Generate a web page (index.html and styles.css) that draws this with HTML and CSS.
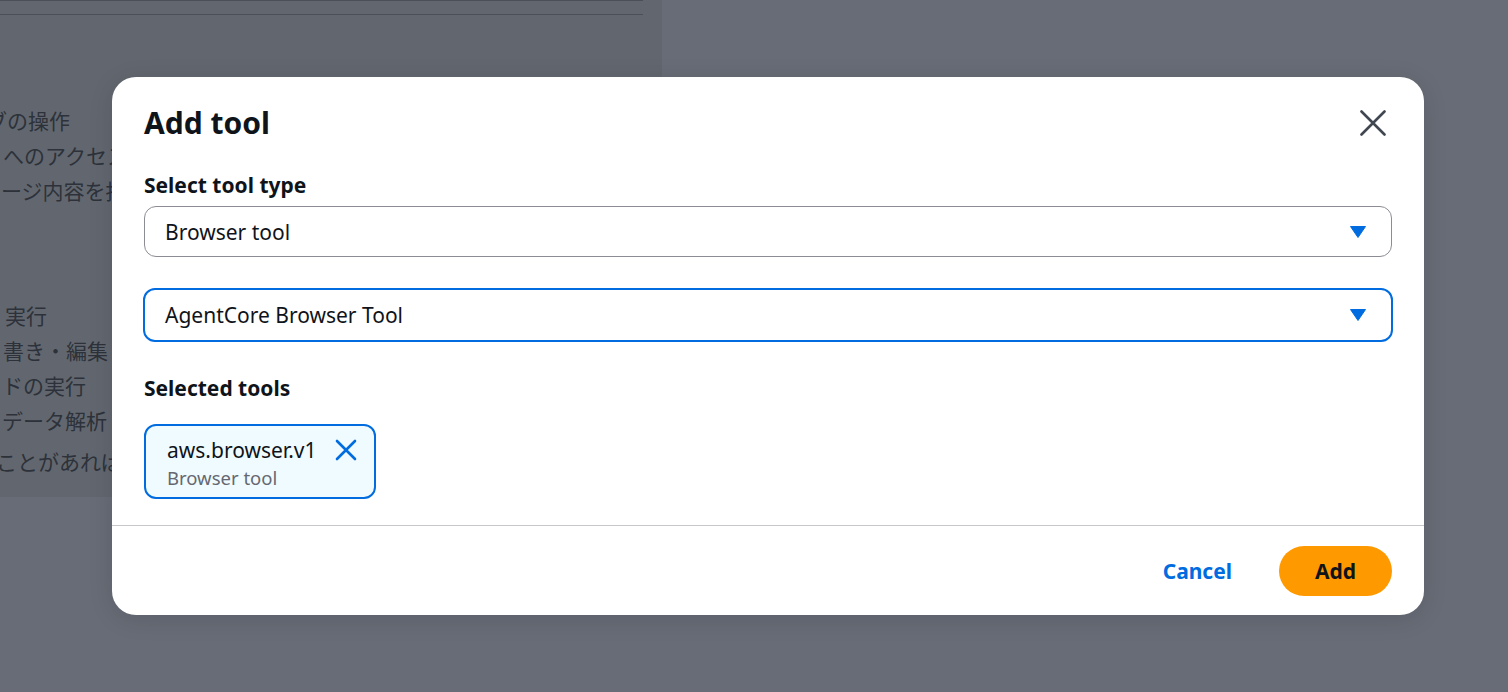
FILE: index.html
```html
<!DOCTYPE html>
<html lang="en">
<head>
<meta charset="utf-8">
<title>Add tool</title>
<link rel="stylesheet" href="styles.css">
</head>
<body>
<div class="stage">
  <div class="panel">
    <div class="rule rule-top"></div>
    <div class="rule"></div>
    <div class="bg-text">
      <p class="l1">ブの操作</p>
      <p class="l2">へのアクセス</p>
      <p class="l3">ージ内容を抽出</p>
      <p class="l4">実行</p>
      <p class="l5">書き・編集</p>
      <p class="l6">ドの実行</p>
      <p class="l7">データ解析</p>
      <p class="l8">ことがあれば</p>
    </div>
  </div>

  <div class="modal" role="dialog" aria-label="Add tool">
    <div class="modal-header">
      <h2 class="modal-title">Add tool</h2>
      <button class="close-btn" aria-label="Close">
        <svg width="26" height="26" viewBox="0 0 26 26"><path d="M1.5 1.5 L24.5 24.5 M24.5 1.5 L1.5 24.5" stroke="#414750" stroke-width="2.6" stroke-linecap="round" fill="none"/></svg>
      </button>
    </div>
    <div class="modal-body">
      <div class="field-label">Select tool type</div>
      <div class="select">
        <span>Browser tool</span>
        <svg class="caret" width="16" height="12" viewBox="0 0 16 12"><path d="M0.5 0.5 H15.5 L8 11.5 Z" fill="#006ce0" stroke="#006ce0" stroke-linejoin="round"/></svg>
      </div>
      <div class="select select-focus">
        <span>AgentCore Browser Tool</span>
        <svg class="caret" width="16" height="12" viewBox="0 0 16 12"><path d="M0.5 0.5 H15.5 L8 11.5 Z" fill="#006ce0" stroke="#006ce0" stroke-linejoin="round"/></svg>
      </div>
      <div class="field-label label-selected">Selected tools</div>
      <div class="token">
        <div class="token-text">
          <div class="token-name">aws.browser.v1</div>
          <div class="token-desc">Browser tool</div>
        </div>
        <svg class="token-x" width="22" height="22" viewBox="0 0 22 22"><path d="M2 2 L20 20 M20 2 L2 20" stroke="#006ce0" stroke-width="2.6" stroke-linecap="round" fill="none"/></svg>
      </div>
    </div>
    <div class="modal-footer">
      <button class="link-btn">Cancel</button>
      <button class="primary-btn">Add</button>
    </div>
  </div>
</div>
</body>
</html>
```

FILE: styles.css
```css
html, body {
  margin: 0;
  padding: 0;
}
body {
  background: #676c76;
  width: 1508px;
  height: 692px;
  overflow: hidden;
  font-family: "Noto Sans", "Open Sans", sans-serif;
}
.stage {
  position: relative;
  width: 1508px;
  height: 692px;
}
.panel {
  width: 662px;
  height: 497px;
  background: #62676f;
  overflow: hidden;
}
.rule {
  height: 1px;
  width: 643px;
  background: #4b5058;
  margin-top: 13px;
}
.rule-top {
  margin-top: 0;
}
.bg-text {
  font-family: "Noto Sans CJK JP", sans-serif;
  font-size: 21px;
  color: #2d323a;
  padding-top: 88px;
}
.bg-text p {
  margin: 0;
  line-height: 35px;
  white-space: nowrap;
}
.bg-text .l1 { margin-left: -14px; }
.bg-text .l2 { margin-left: 3px; }
.bg-text .l3 { margin-left: 1px; }
.bg-text .l4 { margin-left: 5px; margin-top: 90px; }
.bg-text .l5 { margin-left: 3px; }
.bg-text .l6 { margin-left: 2px; }
.bg-text .l7 { margin-left: 2px; }
.bg-text .l8 { margin-left: -4px; margin-top: 6px; }

.modal {
  position: absolute;
  left: 112px;
  top: 77px;
  width: 1312px;
  background: #ffffff;
  border-radius: 24px;
  box-shadow: 0 4px 24px rgba(0, 7, 22, 0.12);
  overflow: hidden;
}
.modal-header {
  display: flex;
  align-items: center;
  justify-content: space-between;
  padding: 28px 38px 0 32px;
}
.modal-title {
  margin: 0;
  font-size: 30px;
  line-height: 36px;
  font-weight: 700;
  color: #0f141a;
}
.close-btn {
  border: 0;
  background: none;
  padding: 0;
  width: 26px;
  height: 26px;
  display: flex;
}
.modal-body {
  padding: 32px 32px 26px 32px;
}
.field-label {
  font-size: 21px;
  line-height: 24px;
  font-weight: 700;
  color: #0f141a;
}
.select {
  box-sizing: border-box;
  height: 51px;
  margin-top: 9px;
  border: 1px solid #8c8c94;
  border-radius: 12px;
  display: flex;
  align-items: center;
  justify-content: space-between;
  padding: 0 25px 0 20px;
  font-size: 21px;
  color: #0f141a;
}
.select-focus {
  height: 54px;
  margin: 31px -1px 0 -1px;
  border: 2px solid #006ce0;
  padding: 0 25px 0 20px;
}
.caret {
  display: block;
}
.label-selected {
  margin-top: 34px;
}
.token {
  box-sizing: border-box;
  margin-top: 24px;
  width: 232px;
  height: 75px;
  border: 2px solid #006ce0;
  border-radius: 12px;
  background: #f0fbff;
  display: flex;
  align-items: flex-start;
  justify-content: space-between;
  padding: 11px 17px 0 21px;
}
.token-name {
  font-size: 21px;
  line-height: 26px;
  color: #0f141a;
}
.token-desc {
  font-size: 18.5px;
  line-height: 24px;
  margin-top: 3px;
  color: #656871;
}
.token-x {
  margin-top: 2px;
}
.modal-footer {
  border-top: 1px solid #c6c6cd;
  display: flex;
  justify-content: flex-end;
  align-items: center;
  gap: 47px;
  padding: 20px 32px 19px 32px;
}
.link-btn {
  border: 0;
  background: none;
  padding: 0;
  font-family: inherit;
  font-size: 21px;
  font-weight: 700;
  color: #006ce0;
}
.primary-btn {
  border: 0;
  background: #ff9900;
  width: 113px;
  height: 50px;
  border-radius: 25px;
  font-family: inherit;
  font-size: 21px;
  font-weight: 700;
  color: #0f141a;
}
```
